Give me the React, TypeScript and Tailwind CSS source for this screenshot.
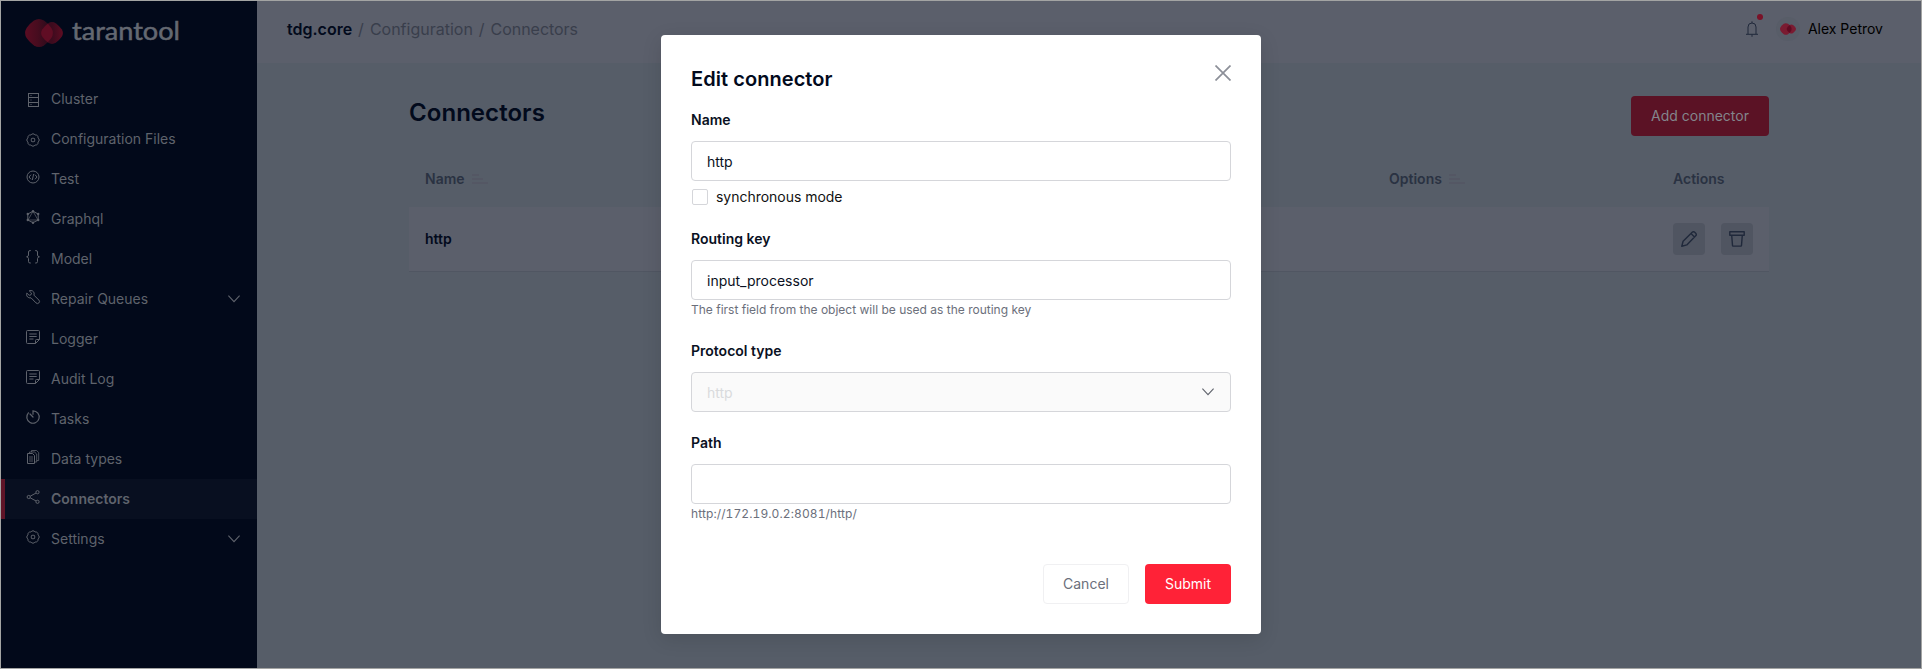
import React from "react";

type IconProps = { children: React.ReactNode; className?: string };

function Icon({ children, className = "" }: IconProps) {
  return (
    <svg viewBox="0 0 14 14" width="14" height="14" fill="none" stroke="currentColor" strokeWidth="1" className={`block shrink-0 overflow-visible ${className}`}>
      {children}
    </svg>
  );
}

const gear = (
  <>
    <path d="M4.930 2A2.400 2.400 0 0 1 9.070 2A2.400 2.400 0 0 1 12 4.930A2.400 2.400 0 0 1 12 9.070A2.400 2.400 0 0 1 9.070 12A2.400 2.400 0 0 1 4.930 12A2.400 2.400 0 0 1 2 9.070A2.400 2.400 0 0 1 2 4.930A2.400 2.400 0 0 1 4.930 2z" strokeLinejoin="round" />
    <rect x="5.300" y="5.300" width="3.400" height="3.400" rx=".8" />
  </>
);
const note = (
  <>
    <path d="M9.500 13.500h-8a1 1 0 0 1-1-1v-11a1 1 0 0 1 1-1h11a1 1 0 0 1 1 1v8zM9.500 13.500v-3a1 1 0 0 1 1-1h3" />
    <path d="M3.300 4h7.400M3.300 6.500h7.400M3.300 9h4.200" />
  </>
);

const icons: Record<string, React.ReactNode> = {
  cluster: (
    <>
      <rect x="2.500" y=".5" width="10" height="13" />
      <path d="M2.500 4.500h10M2.500 9.500h10M4.500 2.500h1M4.500 7h1M4.500 11.500h1" />
    </>
  ),
  gear,
  code: (
    <>
      <circle cx="7" cy="7" r="6" />
      <path d="M5 4.700 3 7l2 2.300M9 4.700 11 7 9 9.300M7.700 4 6.300 10" />
    </>
  ),
  graphql: (
    <>
      <path d="M7 1.300 12.200 4v6L7 12.700 1.800 10V4z" />
      <path d="M7 1.300 2 10h10z" strokeWidth=".7" />
      <g fill="currentColor" stroke="none">
        <circle cx="7" cy="1.200" r="1.200" /><circle cx="12.200" cy="4" r="1.200" /><circle cx="12.200" cy="10" r="1.200" />
        <circle cx="7" cy="12.800" r="1.200" /><circle cx="1.800" cy="10" r="1.200" /><circle cx="1.800" cy="4" r="1.200" />
      </g>
    </>
  ),
  braces: <path d="M4.800.6H4Q2.500.6 2.500 2v3q0 1.600-1.900 1.800Q2.500 7 2.500 8.600v3q0 1.400 1.500 1.400h.8M9.200.6h.8q1.500 0 1.500 1.400v3q0 1.600 1.900 1.800-1.900.2-1.900 1.800v3q0 1.400-1.500 1.400h-.8" />,
  wrench: <path d="m3.200.8 2.300 2.300-.5 1.700-1.800.5L.8 3.100C.1 5 .9 7 2.800 7.700q1.100.4 2.200.1l5 5.100a2 2 0 0 0 2.900-2.800l-5-5C8.500 3.500 8 1.900 6.700 1Q5.100.1 3.200.8z" strokeLinejoin="round" />,
  note,
  timer: <path d="M7 4.200V.8a6.200 6.200 0 1 1-4.600 2M4 4l3 3" strokeLinecap="round" strokeWidth="1.200" />,
  docs: (
    <>
      <path d="M1.500 3.500h5l2 2v8h-7z" />
      <path d="M3.500 3.500V2h5l2.200 2v8H8.700M5.500 2V.5h5l2.200 2v8h-2M3 7h4M3 9h4M3 11h4" strokeWidth=".8" />
    </>
  ),
  share: (
    <>
      <circle cx="2.700" cy="7" r="1.600" /><circle cx="11.500" cy="2.200" r="1.600" /><circle cx="11.500" cy="11.800" r="1.600" />
      <path d="m4.200 6.200 5.900-3.200M4.200 7.800l5.900 3.200" />
    </>
  ),
};

const nav = [
  { label: "Cluster", icon: "cluster", low: true },
  { label: "Configuration Files", icon: "gear", low: true },
  { label: "Test", icon: "code" },
  { label: "Graphql", icon: "graphql" },
  { label: "Model", icon: "braces" },
  { label: "Repair Queues", icon: "wrench", more: true },
  { label: "Logger", icon: "note" },
  { label: "Audit Log", icon: "note" },
  { label: "Tasks", icon: "timer" },
  { label: "Data types", icon: "docs" },
  { label: "Connectors", icon: "share", active: true },
  { label: "Settings", icon: "gear", more: true },
];

function Chevron() {
  return (
    <svg viewBox="0 0 12 8" width="12" height="8" fill="none" stroke="currentColor" strokeWidth="1.100" className="block">
      <path d="m.4.700 5.600 6 5.600-6" />
    </svg>
  );
}

function Logo() {
  return (
    <svg viewBox="0 0 38 28" width="38" height="28" className="block">
      <defs>
        <linearGradient id="lobe" gradientUnits="userSpaceOnUse" x1="0" x2="28" y1="14" y2="14">
          <stop offset="0" stopColor="#5b0c22" />
          <stop offset=".45" stopColor="#470c1f" />
          <stop offset=".8" stopColor="#2f0b1c" />
        </linearGradient>
        <linearGradient id="lobeSmall" gradientUnits="userSpaceOnUse" x1="16" x2="38" y1="14" y2="14">
          <stop offset=".5" stopColor="#3c0b1e" />
          <stop offset="1" stopColor="#5e0c22" />
        </linearGradient>
        <path id="big" d="M9 1.600Q14-1.400 19 1.600Q23.500 4.800 26.400 9Q29.400 14 26.400 19Q23.500 23.200 19 26.400Q14 29.400 9 26.400Q4.500 23.200 1.600 19Q-1.400 14 1.600 9Q4.500 4.800 9 1.600z" />
        <path id="small" d="M23 4.400Q27 1.800 31 4.400Q34.500 7 36.700 10.200Q39.100 14 36.700 17.800Q34.500 21 31 23.600Q27 26.200 23 23.600Q19.500 21 17.300 17.800Q14.900 14 17.300 10.200Q19.500 7 23 4.400z" />
        <clipPath id="bigClip"><use href="#big" /></clipPath>
      </defs>
      <use href="#big" fill="url(#lobe)" />
      <use href="#small" fill="url(#lobeSmall)" />
      <g clipPath="url(#bigClip)"><use href="#small" fill="#600d24" /></g>
    </svg>
  );
}

function Wordmark() {
  return (
    <svg viewBox="0 0 110 24" width="110" height="24" className="block overflow-visible" aria-label="tarantool">
      <text x="0" y="21" textLength="108" lengthAdjust="spacingAndGlyphs" fontSize="25" fill="#646871" stroke="#646871" strokeWidth=".5" className="font-['Lato',sans-serif]">tarantool</text>
    </svg>
  );
}

function Sidebar() {
  return (
    <aside className="flex w-[256px] shrink-0 flex-col bg-[#02091a] text-[#5f636c]">
      <div className="flex h-[78px] items-start pl-6 pt-[18px]">
        <Logo />
        <div className="pl-[9px]"><Wordmark /></div>
      </div>
      <nav className="flex flex-col">
        {nav.map((n) => (
          <div key={n.label} className={`flex h-10 items-center pr-[17px] ${n.active ? "border-l-4 border-[#5f1427] bg-[#080f20] pl-[21px] font-semibold" : "pl-[25px]"}`}>
            <Icon className={n.low ? "mt-[2px]" : "-mt-1"}>{icons[n.icon]}</Icon>
            <span className="grow pl-[11px] text-sm leading-[22px]">{n.label}</span>
            {n.more && <Chevron />}
          </div>
        ))}
      </nav>
    </aside>
  );
}

function SortIcon() {
  return (
    <svg viewBox="0 0 16 10" width="16" height="10" className="block" stroke="#545663" strokeWidth="1.500">
      <path d="M0 1h7M0 5h11M0 9h16" />
    </svg>
  );
}

function Header() {
  return (
    <header className="flex h-[62px] shrink-0 items-start justify-between bg-[#5b5f6b] pl-[30px] pr-[38px] pt-4">
      <div className="flex text-base leading-6 text-[#393e4b]">
        <span className="font-semibold text-[#020a1c]">tdg.core</span>
        <span className="px-[6px]">/</span>
        <span>Configuration</span>
        <span className="px-[6px]">/</span>
        <span className="tracking-[-0.05px]">Connectors</span>
      </div>
      <div className="flex items-center">
        <div className="relative mr-[17px]">
          <svg viewBox="0 0 14 16" width="14" height="16" fill="none" stroke="#20293b" className="block">
            <path d="M3 13V6a4 4 0 0 1 8 0v7M1 13.300h12M7 .300V2M7 13.500v2.300" />
          </svg>
          <span className="absolute -top-[7px] left-[12px] size-[6px] rounded-full bg-[#7a1228]" />
        </div>
        <div className="mr-2 flex size-6 items-center justify-center rounded-full bg-[#585d68]">
          <svg viewBox="0 0 38 28" width="16" height="12">
            <use href="#big" fill="#7a1b31" />
            <use href="#small" fill="#7a1b31" />
            <g clipPath="url(#bigClip)"><use href="#small" fill="#600a22" /></g>
          </svg>
        </div>
        <span className="text-sm leading-[22px] text-black">Alex Petrov</span>
      </div>
    </header>
  );
}

function ActionButton({ children }: { children: React.ReactNode }) {
  return <button className="flex size-8 items-center justify-center rounded bg-[#505561] text-[#20293b]">{children}</button>;
}

function ConnectorsPage() {
  return (
    <main className="grow bg-[#565d68] pl-[152px] pr-[152px] pt-[33px]">
      <div className="flex items-start justify-between">
        <h1 className="pt-px text-2xl font-semibold leading-8 tracking-[0.05px] text-[#020a1c]">Connectors</h1>
        <button className="h-10 w-[138px] rounded bg-[#5b1225] text-sm text-[#83858c]">Add connector</button>
      </div>
      <div className="mt-[19px] grid h-12 grid-cols-[964px_284px_1fr] items-center pl-4 text-sm font-semibold text-[#2a3242]">
        <div className="flex items-center gap-[7px]">Name <SortIcon /></div>
        <div className="flex items-center gap-[7px]">Options <SortIcon /></div>
        <div>Actions</div>
      </div>
      <div className="mt-1 flex h-16 items-center justify-between bg-[#5b5f6b] pl-4 pr-4 shadow-[0_1px_0_#505662]">
        <span className="text-sm font-semibold text-[#020a1c]">http</span>
        <div className="flex gap-4">
          <ActionButton>
            <svg viewBox="0 0 16 16" width="16" height="16" fill="none" stroke="currentColor" strokeWidth="1.400" strokeLinejoin="round">
              <path d="m.8 15.200 1.300-5L11.200 1.300a1.800 1.800 0 0 1 2.500 0l1 1a1.800 1.800 0 0 1 0 2.500L5.800 13.900zM10 2.500 13.500 6" />
            </svg>
          </ActionButton>
          <ActionButton>
            <svg viewBox="0 0 16 16" width="16" height="16" fill="none" stroke="currentColor" strokeWidth="1.400" strokeLinejoin="round">
              <path d="M.8.800h14.400v3.400H.8zM2.700 4.200l.8 10.200q0 .7.700.7h7.600q.7 0 .7-.7l.8-10.200" />
            </svg>
          </ActionButton>
        </div>
      </div>
    </main>
  );
}

const label = "block text-sm font-semibold leading-[22px] text-[#0a1022]";
const field = "block h-10 w-full rounded border border-[#d5d6da] bg-white px-[15px] pt-px text-sm leading-[22px] text-[#0a1022] outline-none";
const hint = "text-xs leading-5 text-[#6b6f7b]";

function EditDialog() {
  return (
    <div className="absolute left-[660px] top-[34px] flex h-[599px] w-[600px] flex-col rounded bg-white px-[30px] shadow-[0_5px_20px_rgba(0,0,0,0.12)]">
      <div className="flex justify-between pt-[30px]">
        <h2 className="pt-px text-xl font-semibold leading-[26px] tracking-[0.06px] text-[#020a1c]">Edit connector</h2>
        <svg viewBox="0 0 16 16" width="16" height="16" stroke="#8c8f98" strokeWidth="1.700" fill="none" className="block">
          <path d="m.5.500 15 15M15.500.500l-15 15" />
        </svg>
      </div>
      <div className="pt-[17px]">
        <label className={label}>Name</label>
        <input className={`${field} mt-[10px]`} defaultValue="http" />
        <div className="flex items-center pl-px pt-[5px]">
          <span className="size-4 rounded-[2px] border border-[#d5d6da]" />
          <span className="pl-2 text-sm leading-[22px] tracking-[-0.03px] text-[#111111]">synchronous mode</span>
        </div>
      </div>
      <div className="pt-5">
        <label className={label}>Routing key</label>
        <input className={`${field} mt-[10px]`} defaultValue="input_processor" />
        <p className={hint}>The first field from the object will be used as the routing key</p>
      </div>
      <div className="pt-5">
        <label className={label}>Protocol type</label>
        <div className="mt-[10px] flex h-10 items-center justify-between rounded border border-[#d5d6da] bg-[#fafafa] pl-[15px] pr-4 text-sm leading-[22px] text-[#d9dadd]">
          <span className="pt-px">http</span>
          <span className="text-[#5f636c]"><Chevron /></span>
        </div>
      </div>
      <div className="pt-5">
        <label className={label}>Path</label>
        <input className={`${field} mt-[10px]`} defaultValue="" />
        <p className={`${hint} tabular-nums tracking-[0.1px]`}>http://172.19.0.2:8081/http/</p>
      </div>
      <div className="mt-auto flex justify-end gap-4 pb-[30px] text-sm">
        <button className="h-10 w-[86px] rounded border border-[#f0f0f2] bg-white text-[#6b6f7b]">Cancel</button>
        <button className="h-10 w-[86px] rounded bg-[#ff2237] text-white">Submit</button>
      </div>
    </div>
  );
}

export default function App() {
  return (
    <div className="relative flex h-[669px] w-[1922px] overflow-hidden border border-[#a3a4a3] font-['Inter',sans-serif]">
      <Sidebar />
      <div className="flex grow flex-col">
        <Header />
        <ConnectorsPage />
      </div>
      <EditDialog />
    </div>
  );
}
